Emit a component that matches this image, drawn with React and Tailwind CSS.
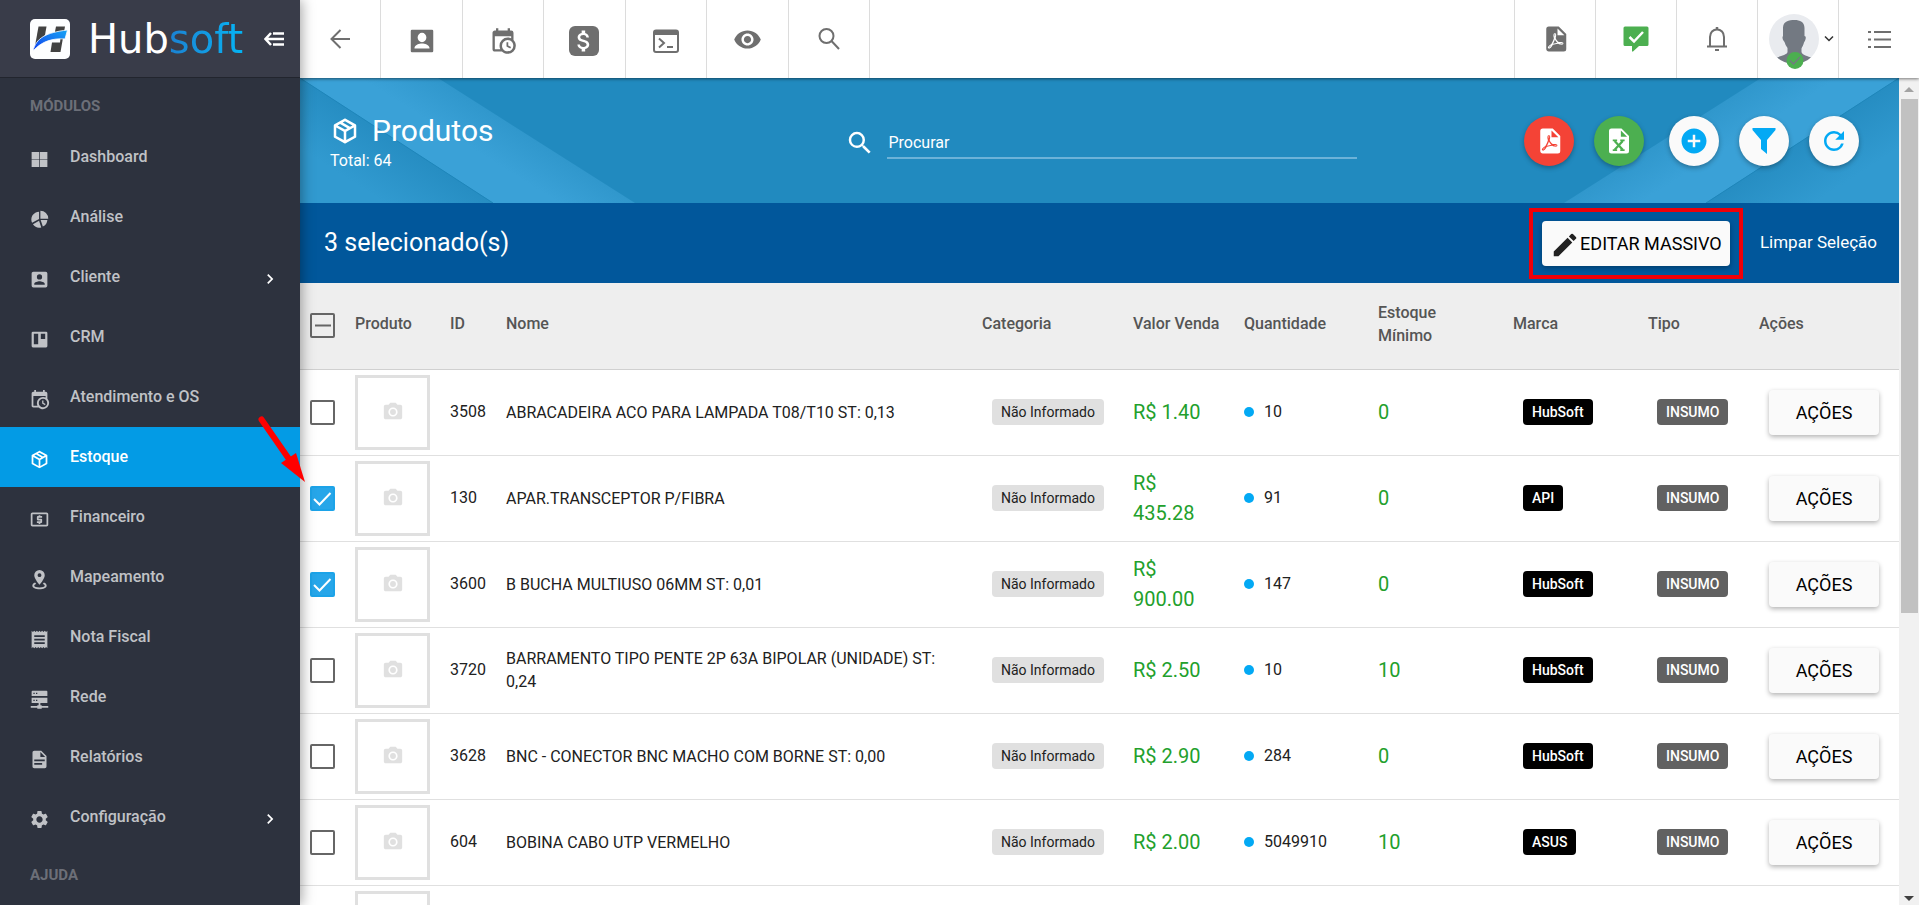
import {
  MdAddCircle,
  MdAttachMoney,
  MdChevronRight,
  MdCreate,
  MdLocalAtm,
  MdPhotoCamera,
  MdReceipt,
  MdRefresh,
  MdRemoveRedEye,
  MdSearch,
  MdSettings,
} from "react-icons/md";

const paths = {
  box: "M21,16.5C21,16.88 20.79,17.21 20.47,17.38L12.57,21.82C12.41,21.94 12.21,22 12,22C11.79,22 11.59,21.94 11.43,21.82L3.53,17.38C3.21,17.21 3,16.88 3,16.5V7.5C3,7.12 3.21,6.79 3.53,6.62L11.43,2.18C11.59,2.06 11.79,2 12,2C12.21,2 12.41,2.06 12.57,2.18L20.47,6.62C20.79,6.79 21,7.12 21,7.5V16.5M12,4.15L10.11,5.22L16,8.61L17.96,7.5L12,4.15M6.04,7.5L12,10.85L13.96,9.75L8.08,6.35L6.04,7.5M5,15.91L11,19.29V12.58L5,9.21V15.91M19,15.91V9.21L13,12.58V19.29L19,15.91Z",
  account:
    "M6,17C6,15 10,13.9 12,13.9C14,13.9 18,15 18,17V18H6M15,9A3,3 0 0,1 12,12A3,3 0 0,1 9,9A3,3 0 0,1 12,6A3,3 0 0,1 15,9M3,5V19A2,2 0 0,0 5,21H19A2,2 0 0,0 21,19V5A2,2 0 0,0 19,3H5C3.89,3 3,3.9 3,5Z",
  accountTop:
    "M6,17.5C6,15 10,13.9 12,13.9C14,13.9 18,15 18,17.5V18H6M15.500,9.2A3.5,3.8 0 0,1 12,13A3.5,3.8 0 0,1 8.500,9.2A3.5,3.8 0 0,1 12,5.4A3.5,3.8 0 0,1 15.5,9.2M3,4V20A1,1 0 0,0 4,21H20A1,1 0 0,0 21,20V4A1,1 0 0,0 20,3H4A1,1 0 0,0 3,4Z",
  calendar:
    "M15,13H16.5V15.82L18.94,17.23L18.19,18.53L15,16.69V13M19,8H5V19H9.67C9.24,18.09 9,17.07 9,16A7,7 0 0,1 16,9C17.07,9 18.09,9.24 19,9.67V8M5,21C3.89,21 3,20.1 3,19V5C3,3.89 3.89,3 5,3H6V1H8V3H16V1H18V3H19A2,2 0 0,1 21,5V11.1C22.24,12.36 23,14.09 23,16A7,7 0 0,1 16,23C14.09,23 12.36,22.24 11.1,21H5M16,11.15A4.85,4.85 0 0,0 11.15,16C11.15,18.68 13.32,20.85 16,20.85A4.85,4.85 0 0,0 20.85,16C20.85,13.32 18.68,11.15 16,11.15Z",
  windows: "M3 3.500H11.600V11.600H3ZM12.400 3.500H21V11.600H12.400ZM3 12.400H11.600V20.500H3ZM12.400 12.400H21V20.500H12.400Z",
  pie: "M13 2A9 9 0 0 1 22 11H13ZM11.500 3V11.500L3.500 15.800A9 9 0 0 1 11.500 3ZM4.500 17.500L11.500 13.500L14 21A9 9 0 0 1 4.500 17.500ZM13.300 12.500H21A9 9 0 0 1 15.800 20Z",
  board:
    "M4.500 3H19.500A1.500 1.500 0 0 1 21 4.500V19.500A1.500 1.500 0 0 1 19.500 21H4.500A1.500 1.500 0 0 1 3 19.500V4.500A1.500 1.500 0 0 1 4.500 3ZM5.500 5.500V17.500H10.500V5.500ZM13.500 5.500V11.500H18.500V5.500Z",
  pin: "M12 1A6 6 0 0 1 18 7C18 11 12 18 12 18S6 11 6 7A6 6 0 0 1 12 1ZM12 4.800A2.200 2.200 0 1 0 12 9.200A2.200 2.200 0 0 0 12 4.800ZM7 15.500L8.300 17.200C6.800 17.700 6 18.300 6 19C6 20.200 8.700 21 12 21S18 20.200 18 19C18 18.300 17.200 17.700 15.700 17.200L17 15.500C19 16.300 20.200 17.500 20.200 19C20.200 21.600 16.500 23 12 23S3.800 21.600 3.800 19C3.800 17.500 5 16.300 7 15.500Z",
  server:
    "M4 2H20A1 1 0 0 1 21 3V8H3V3A1 1 0 0 1 4 2ZM5 4.300V5.800H6.500V4.300ZM8 4.300V5.800H9.500V4.300ZM3 10H21V16H3ZM5 12.200V13.700H6.500V12.200ZM8 12.200V13.700H9.500V12.200ZM11 16H13V18.500H14.500V19.500H22V21.500H14.500V22.500H9.500V21.500H2V19.500H9.500V18.500H11Z",
  file: "M13,9H18.5L13,3.5V9M6,2H14L20,8V20A2,2 0 0,1 18,22H6C4.89,22 4,21.1 4,20V4C4,2.89 4.89,2 6,2M15,18V16H6V18H15M18,14V12H6V14H18Z",
  pdf: "M14,9H19.5L14,3.5V9M7,2H15L21,8V20A2,2 0 0,1 19,22H7C5.89,22 5,21.1 5,20V4A2,2 0 0,1 7,2M11.93,12.44C12.34,13.34 12.86,14.08 13.46,14.59L13.87,14.91C13,15.07 11.8,15.35 10.53,15.84V15.84L10.42,15.88L10.92,14.84C11.37,13.97 11.7,13.18 11.93,12.44M18.41,16.25C18.59,16.07 18.68,15.84 18.69,15.59C18.72,15.39 18.67,15.2 18.57,15.04C18.28,14.57 17.53,14.35 16.29,14.35L15,14.42L14.13,13.84C13.5,13.32 12.93,12.41 12.53,11.28L12.57,11.14C12.9,9.81 13.21,8.2 12.55,7.54C12.39,7.38 12.17,7.3 11.94,7.3H11.7C11.33,7.3 11,7.69 10.91,8.07C10.54,9.4 10.76,10.13 11.13,11.34V11.35C10.88,12.23 10.56,13.25 10.05,14.28L9.09,16.08L8.2,16.57C7,17.32 6.43,18.16 6.32,18.69C6.28,18.88 6.3,19.05 6.37,19.23L6.4,19.28L6.88,19.59L7.32,19.7C8.13,19.7 9.05,18.75 10.29,16.63L10.47,16.56C11.5,16.23 12.78,16 14.5,15.81C15.53,16.32 16.74,16.55 17.5,16.55C17.94,16.55 18.24,16.44 18.41,16.25M18,15.54L18.09,15.65C18.08,15.75 18.05,15.76 18,15.78H17.96L17.77,15.8C17.31,15.8 16.6,15.61 15.87,15.29C15.96,15.19 16,15.19 16.1,15.19C17.5,15.19 17.9,15.44 18,15.54M8.83,17C8.18,18.19 7.59,18.85 7.14,19C7.19,18.62 7.64,17.96 8.35,17.31L8.83,17M11.85,10.09C11.62,9.19 11.61,8.46 11.78,8.04L11.85,7.92L12,7.97C12.17,8.21 12.19,8.53 12.09,9.07L12.06,9.23L11.9,10.05L11.85,10.09Z",
};

function Icon({ name, className }) {
  return (
    <svg viewBox="0 0 24 24" fill="currentColor" fillRule="evenodd" className={className} aria-hidden="true">
      <path d={paths[name]} />
    </svg>
  );
}

const mdi = (name) => (props) => <Icon name={name} {...props} />;

const modules = [
  { label: "Dashboard", icon: mdi("windows") },
  { label: "Análise", icon: mdi("pie") },
  { label: "Cliente", icon: mdi("account"), children: true },
  { label: "CRM", icon: mdi("board") },
  { label: "Atendimento e OS", icon: mdi("calendar") },
  { label: "Estoque", icon: mdi("box"), active: true },
  { label: "Financeiro", icon: MdLocalAtm },
  { label: "Mapeamento", icon: mdi("pin") },
  { label: "Nota Fiscal", icon: MdReceipt },
  { label: "Rede", icon: mdi("server") },
  { label: "Relatórios", icon: mdi("file") },
  { label: "Configuração", icon: MdSettings, children: true },
];

const products = [
  { id: "3508", name: "ABRACADEIRA ACO PARA LAMPADA T08/T10 ST: 0,13", price: "R$ 1.40", qty: "10", min: "0", brand: "HubSoft" },
  { id: "130", name: "APAR.TRANSCEPTOR P/FIBRA", price: "R$ 435.28", qty: "91", min: "0", brand: "API", checked: true },
  { id: "3600", name: "B BUCHA MULTIUSO 06MM ST: 0,01", price: "R$ 900.00", qty: "147", min: "0", brand: "HubSoft", checked: true },
  { id: "3720", name: "BARRAMENTO TIPO PENTE 2P 63A BIPOLAR (UNIDADE) ST: 0,24", price: "R$ 2.50", qty: "10", min: "10", brand: "HubSoft" },
  { id: "3628", name: "BNC - CONECTOR BNC MACHO COM BORNE ST: 0,00", price: "R$ 2.90", qty: "284", min: "0", brand: "HubSoft" },
  { id: "604", name: "BOBINA CABO UTP VERMELHO", price: "R$ 2.00", qty: "5049910", min: "10", brand: "ASUS" },
];

function Logo() {
  return (
    <a href="#" className="flex items-center gap-[18px]">
      <svg viewBox="0 0 40 40" className="size-10 shrink-0" aria-hidden="true">
        <defs>
          <linearGradient id="swoosh" x1="0" y1="1" x2="1" y2="0">
            <stop offset="0" stopColor="#0a3cf0" />
            <stop offset="0.5" stopColor="#1673f0" />
            <stop offset="1" stopColor="#16a5f5" />
          </linearGradient>
        </defs>
        <rect width="40" height="40" rx="5" fill="#fdfeff" />
        <path d="M8.500 7.500H16.500L15 16L5 27Z" fill="#424242" />
        <path d="M26 7.500H35L30.500 33H20.500L22 23.500H30L31 15H24.500Z" fill="#424242" />
        <path d="M3 32C6 19 16 13.500 37.500 11L35 20C23 19 12 22 3 32Z" fill="url(#swoosh)" stroke="#fdfeff" strokeWidth="0.8" />
      </svg>
      <span className="font-['DejaVu_Sans',sans-serif] text-[40px] leading-10 text-white">
        Hub<span className="bg-linear-to-r from-[#1a82d2] to-[#03b4f4] bg-clip-text text-transparent">soft</span>
      </span>
    </a>
  );
}

function Sidebar() {
  return (
    <aside className="relative z-20 flex w-[300px] shrink-0 flex-col bg-[#2d323e] shadow-[2px_0_12px_rgba(0,0,0,0.35)]">
      <div className="flex h-[78px] shrink-0 items-center justify-between border-b border-[#22252e] bg-[#393c49] pr-4 pl-[30px]">
        <Logo />
        <button type="button" aria-label="Recolher menu" className="text-white">
          <svg viewBox="0 0 20 16" className="h-4 w-5" fill="none" stroke="currentColor" strokeWidth="2.500">
            <path d="M7 2L1.500 8L7 14M1.500 8H20M9 2.500H20M9 13.500H20" />
          </svg>
        </button>
      </div>
      <h2 className="flex h-[49px] shrink-0 items-center pt-2 pl-[30px] text-[15px] font-bold text-[#6c6f78]">MÓDULOS</h2>
      <nav>
        {modules.map(({ label, icon: ItemIcon, active, children }) => (
          <a
            key={label}
            href="#"
            className={
              active
                ? "flex h-[60px] items-center bg-[#039be5] pr-5 pl-[29px] font-medium text-white"
                : "flex h-[60px] items-center pr-5 pl-[29px] font-medium text-[#c0c2c6]"
            }
          >
            <ItemIcon className="mt-1 mr-5 size-[21px] shrink-0" />
            <span className="flex-1">{label}</span>
            {children && <MdChevronRight className="mt-1 size-5 text-white" />}
          </a>
        ))}
      </nav>
      <h2 className="flex h-[49px] shrink-0 items-center pt-2 pl-[30px] text-[15px] font-bold text-[#6c6f78]">AJUDA</h2>
    </aside>
  );
}

function ToolButton({ label, className, children }) {
  return (
    <button type="button" aria-label={label} className={`flex items-center justify-center text-[#6f6f6f] ${className}`}>
      {children}
    </button>
  );
}

function Toolbar() {
  const left = "border-r border-[#dcdcdc]";
  const right = "border-l border-[#dcdcdc]";
  return (
    <header className="relative z-10 flex h-[78px] shrink-0 justify-between bg-white shadow-[0_1px_3px_rgba(0,0,0,0.5)]">
      <div className="grid w-[570px] grid-cols-7">
        <ToolButton label="Voltar" className={left}>
          <svg viewBox="0 0 20 20" className="size-5" fill="none" stroke="currentColor" strokeWidth="2">
            <path d="M10.500 1L1.500 10L10.500 19M1.500 10H20" />
          </svg>
        </ToolButton>
        <ToolButton label="Clientes" className={left}>
          <Icon name="accountTop" className="mt-1 size-[30px]" />
        </ToolButton>
        <ToolButton label="Agenda" className={left}>
          <Icon name="calendar" className="mt-1 size-[28px]" />
        </ToolButton>
        <ToolButton label="Financeiro" className={left}>
          <span className="mt-1 flex size-[30px] items-center justify-center rounded-md bg-[#6f6f6f]">
            <MdAttachMoney className="size-[28px] text-white" />
          </span>
        </ToolButton>
        <ToolButton label="Terminal" className={left}>
          <svg viewBox="0 0 26 24" className="mt-1 h-6 w-[26px]" fill="none" stroke="currentColor" strokeWidth="2">
            <rect x="1" y="1.500" width="24" height="21.500" rx="2" />
            <path d="M1 4H25" strokeWidth="4" />
            <path d="M6 9.500L11 14L6 18.500M14 18H20" />
          </svg>
        </ToolButton>
        <ToolButton label="Visualizar" className={left}>
          <MdRemoveRedEye className="size-[29px]" />
        </ToolButton>
        <ToolButton label="Pesquisar" className={left}>
          <svg viewBox="0 0 22 22" className="size-[22px]" fill="none" stroke="currentColor" strokeWidth="2">
            <circle cx="8.500" cy="8" r="7" />
            <path d="M13.500 13L21 21" />
          </svg>
        </ToolButton>
      </div>
      <div className="grid w-[405px] grid-cols-5">
        <ToolButton label="Exportar PDF" className={right}>
          <Icon name="pdf" className="size-[30px]" />
        </ToolButton>
        <ToolButton label="Mensagens" className={right}>
          <svg viewBox="0 0 26 26" className="size-[26px]" aria-hidden="true">
            <path d="M2 0.500H24A1.500 1.500 0 0 1 25.500 2V18.500A1.500 1.500 0 0 1 24 20H16L10 25.500H9V20H2A1.500 1.500 0 0 1 0.500 18.500V2A1.500 1.500 0 0 1 2 0.500Z" fill="#4caf50" />
            <path d="M6.500 11L11 15.500L20 6" fill="none" stroke="#fff" strokeWidth="2.500" />
          </svg>
        </ToolButton>
        <ToolButton label="Notificações" className={right}>
          <svg viewBox="0 0 22 26" className="h-[26px] w-[22px]" fill="none" stroke="currentColor" strokeWidth="2">
            <path d="M1 20.500H21M4 20V11C4 6.500 7 3.500 11 3.500S18 6.500 18 11V20" />
            <path d="M11 1V4" strokeWidth="2.500" />
            <path d="M9 24H13" strokeWidth="2" />
          </svg>
        </ToolButton>
        <ToolButton label="Perfil" className={`gap-[5px] pl-1.5 ${right}`}>
          <svg viewBox="0 0 50 55" className="mt-1 h-[55px] w-[50px] shrink-0" aria-hidden="true">
            <defs>
              <clipPath id="face">
                <circle cx="25" cy="25" r="25" />
              </clipPath>
            </defs>
            <circle cx="25" cy="25" r="25" fill="#e9ebef" />
            <path
              clipPath="url(#face)"
              fill="#737982"
              d="M14 14C14 7 20 6 25.500 6S35.500 8 35.500 14V22C37.500 22 37 26 35 28.500C34.500 31 33 33 32.500 34.500V38C33 41 39 42 43 44L36 50H14L7 44C11 42 18 41 18.500 38V34C17 32 16 30 15.500 28C13.500 26 13 23 14 22Z"
            />
            <circle cx="26" cy="46.500" r="8.500" fill="#4caf50" />
            <path d="M21 46.500L24.500 50L31 43" fill="none" stroke="#737982" strokeWidth="1.300" />
          </svg>
          <svg viewBox="0 0 10 6" className="h-[6px] w-[10px] shrink-0" fill="none" stroke="#333" strokeWidth="1.500">
            <path d="M1 0.500L5 4.500L9 0.500" />
          </svg>
        </ToolButton>
        <ToolButton label="Menu rápido" className={right}>
          <svg viewBox="0 0 23 19" className="h-[19px] w-[23px]" fill="none" stroke="currentColor" strokeWidth="2">
            <path d="M6 2H23M6 9.500H23M6 17H23M0 2H3M0 9.500H3M0 17H3" />
          </svg>
        </ToolButton>
      </div>
    </header>
  );
}

function Stripes({ id, className }) {
  return (
    <svg viewBox="0 0 335 125" className={className} aria-hidden="true">
      <defs>
        <linearGradient id={`${id}-corner`} gradientUnits="userSpaceOnUse" x1="97" y1="62" x2="65" y2="112">
          <stop offset="0" stopColor="#268dc2" />
          <stop offset="1" stopColor="#319ad0" />
        </linearGradient>
        <linearGradient id={`${id}-band`} gradientUnits="userSpaceOnUse" x1="138" y1="0" x2="116" y2="35">
          <stop offset="0" stopColor="#3097cc" />
          <stop offset="1" stopColor="#3aa1d7" />
        </linearGradient>
      </defs>
      <path d="M0 0H138L335 125H193Z" fill={`url(#${id}-band)`} />
      <path d="M0 0L193 125H0Z" fill={`url(#${id}-corner)`} />
      <path d="M0 0L193 125" stroke="#1f86ba" strokeWidth="1" />
    </svg>
  );
}

function PageHeader() {
  const fab = "flex size-[50px] items-center justify-center rounded-full shadow-[0_2px_5px_rgba(0,0,0,0.3)]";
  return (
    <div className="relative flex h-[125px] shrink-0 items-center bg-[#218abf] pr-10 pl-[30px] text-white">
      <Stripes id="left" className="absolute top-0 left-0 h-[125px] w-[335px]" />
      <Stripes id="right" className="absolute top-0 right-0 h-[125px] w-[335px] -scale-x-100" />
      <div className="relative flex-1">
        <h1 className="flex items-center gap-3 pt-1 text-[30px] leading-9">
          <Icon name="box" className="size-[30px]" />
          Produtos
        </h1>
        <p className="leading-6">Total: 64</p>
      </div>
      <div className="relative flex w-[524px] items-center gap-3 pl-3">
        <MdSearch className="mt-1 size-[30px]" />
        <input
          type="text"
          aria-label="Procurar"
          placeholder="Procurar"
          className="h-9 flex-1 border-b-2 border-[#6cb2d8] px-0.5 pt-1.5 outline-none placeholder:text-white"
        />
      </div>
      <div className="relative flex flex-1 justify-end gap-5">
        <button type="button" aria-label="Exportar PDF" className={`${fab} bg-[#f44336]`}>
          <Icon name="pdf" className="size-[30px]" />
        </button>
        <button type="button" aria-label="Exportar planilha" className={`${fab} mr-[5px] bg-[#4caf50]`}>
          <svg viewBox="0 0 24 24" className="size-[30px]" aria-hidden="true">
            <path d="M6 2H14L20 8V20A2 2 0 0 1 18 22H6A2 2 0 0 1 4 20V4A2 2 0 0 1 6 2ZM13.500 3.500V8.500H18.500Z" fill="#fff" fillRule="evenodd" />
            <path d="M8.500 12L15 19M15 12L8.500 19" stroke="#4caf50" strokeWidth="1.800" />
            <path d="M7 11.500H10.500M13 11.500H16.500M7 19.300H10.500M13 19.300H16.500" stroke="#4caf50" strokeWidth="1.300" />
          </svg>
        </button>
        <button type="button" aria-label="Adicionar" className={`${fab} bg-[#fafafa] text-[#03a9f4]`}>
          <MdAddCircle className="size-[30px]" />
        </button>
        <button type="button" aria-label="Filtrar" className={`${fab} bg-[#fafafa] text-[#03a9f4]`}>
          <svg viewBox="0 0 24 26" className="h-[26px] w-6" fill="currentColor" aria-hidden="true">
            <path d="M0.500 0H23.500V2L15 12V26L9 21V12L0.500 2Z" />
          </svg>
        </button>
        <button type="button" aria-label="Atualizar" className={`${fab} bg-[#fafafa] text-[#03a9f4]`}>
          <MdRefresh className="size-[30px]" />
        </button>
      </div>
    </div>
  );
}

function SelectionBar() {
  return (
    <div className="flex h-20 shrink-0 items-center justify-between bg-[#01579b] pr-[22px] pl-6 text-white">
      <span className="text-[25px]">3 selecionado(s)</span>
      <div className="flex items-center gap-[17px]">
        {/* highlighted action */}
        <div className="border-4 border-[#f00008] p-[9px]">
          <button
            type="button"
            className="flex h-[45px] w-[188px] items-center justify-center rounded bg-[#fafafa] text-[18px] text-black shadow-[0_2px_5px_rgba(0,0,0,0.3)]"
          >
            <MdCreate className="mt-1 size-[30px] text-[#222]" />
            EDITAR MASSIVO
          </button>
        </div>
        <button type="button" className="text-[17px]">
          Limpar Seleção
        </button>
      </div>
    </div>
  );
}

function Checkbox({ label, checked, partial }) {
  return (
    <label className="grid size-[25px]">
      <input
        type="checkbox"
        aria-label={label}
        defaultChecked={checked}
        className="col-start-1 row-start-1 size-[25px] appearance-none rounded-[2px] border-2 border-[#666] checked:border-[#1ca3e8] checked:bg-[#27a6e9]"
      />
      {(checked || partial) && (
        <svg
          viewBox="0 0 25 25"
          className="pointer-events-none col-start-1 row-start-1 size-[25px]"
          fill="none"
          stroke={checked ? "#fff" : "#666"}
          strokeWidth="2"
        >
          <path d={checked ? "M4 13L9.500 18.500L20.500 7" : "M5 12.500H21"} />
        </svg>
      )}
    </label>
  );
}

function Thumb() {
  return (
    <div className="flex size-[75px] items-center justify-center border-3 border-[#e0e0e0] text-[#e0e0e0]">
      <MdPhotoCamera className="size-[22px]" />
    </div>
  );
}

function ProductTable() {
  const head = "pr-[23px] pb-1 font-medium";
  return (
    <table className="w-full table-fixed border-collapse text-left text-[#212121]">
      <colgroup>
        <col className="w-[55px]" />
        <col className="w-[95px]" />
        <col className="w-[56px]" />
        <col />
        <col className="w-[151px]" />
        <col className="w-[111px]" />
        <col className="w-[134px]" />
        <col className="w-[135px]" />
        <col className="w-[135px]" />
        <col className="w-[111px]" />
        <col className="w-[140px]" />
      </colgroup>
      <thead>
        <tr className="h-[86px] border-b border-[#d0d0d0] bg-[#eeeeee] leading-[23px] text-[#555]">
          <th className="pl-[10px]">
            <Checkbox label="Selecionar todos" partial />
          </th>
          <th className="pb-1 font-medium">Produto</th>
          <th className="pb-1 font-medium">ID</th>
          <th className={head}>Nome</th>
          <th className={head}>Categoria</th>
          <th className={head}>Valor Venda</th>
          <th className={head}>Quantidade</th>
          <th className="pr-16 pb-1 font-medium">Estoque Mínimo</th>
          <th className={head}>Marca</th>
          <th className={head}>Tipo</th>
          <th className={head}>Ações</th>
        </tr>
      </thead>
      <tbody>
        {products.map((p) => (
          <tr key={p.id} className="h-[86px] border-b border-[#e0e0e0]">
            <td className="pl-[10px]">
              <Checkbox label={`Selecionar ${p.id}`} checked={p.checked} />
            </td>
            <td>
              <Thumb />
            </td>
            <td>{p.id}</td>
            <td className="pr-[23px] leading-[23px]">{p.name}</td>
            <td className="pl-[10px]">
              <span className="inline-flex h-[26px] items-center rounded bg-[#e0e0e0] px-[9px] text-sm">Não Informado</span>
            </td>
            <td className="pr-[23px] text-xl leading-[30px] text-[#22a02c]">{p.price}</td>
            <td>
              <span className="flex items-center gap-[10px]">
                <span className="size-[10px] rounded-full bg-[#03a9f4]" />
                {p.qty}
              </span>
            </td>
            <td className="text-xl text-[#22a02c]">{p.min}</td>
            <td className="pl-[10px]">
              <span className="inline-flex h-[26px] items-center rounded bg-black px-[9px] text-sm font-medium text-white">{p.brand}</span>
            </td>
            <td className="pl-[9px]">
              <span className="inline-flex h-[26px] items-center rounded bg-[#616161] px-[9px] text-sm font-medium text-white">INSUMO</span>
            </td>
            <td className="pl-[10px]">
              <button
                type="button"
                className="h-[45px] w-[110px] rounded bg-[#fafafa] text-[18px] text-black shadow-[0_2px_5px_rgba(0,0,0,0.3)]"
              >
                AÇÕES
              </button>
            </td>
          </tr>
        ))}
        <tr className="h-[86px]">
          <td />
          <td colSpan={10}>
            <Thumb />
          </td>
        </tr>
      </tbody>
    </table>
  );
}

function Scrollbar() {
  return (
    <div className="flex w-5 shrink-0 flex-col items-center bg-[#f1f1f1]" aria-hidden="true">
      <svg viewBox="0 0 20 21" className="h-[21px] w-5 shrink-0">
        <path d="M5 14L10 9L15 14Z" fill="#a3a3a3" />
      </svg>
      <div className="ml-px h-[514px] w-[17px] bg-[#c1c1c1]" />
      <svg viewBox="0 0 20 17" className="mt-auto h-[17px] w-5 shrink-0">
        <path d="M5 8L10 13L15 8Z" fill="#404040" />
      </svg>
    </div>
  );
}

export default function App() {
  return (
    <div className="relative flex h-screen overflow-hidden bg-white font-[Roboto,sans-serif] text-base">
      <Sidebar />
      <div className="flex min-w-0 flex-1 flex-col">
        <Toolbar />
        <div className="flex min-h-0 flex-1">
          <main className="min-w-0 flex-1 overflow-hidden">
            <PageHeader />
            <SelectionBar />
            <ProductTable />
          </main>
          <Scrollbar />
        </div>
      </div>
      {/* arrow pointing at the selected rows */}
      <svg viewBox="0 0 50 70" className="pointer-events-none absolute top-[415px] left-[257px] z-30 h-[70px] w-[50px]" aria-hidden="true">
        <path d="M4.500 4.500L34 47" stroke="#f00" strokeWidth="6" strokeLinecap="round" />
        <path d="M48 67L24 48L39 38Z" fill="#f00" />
      </svg>
    </div>
  );
}
